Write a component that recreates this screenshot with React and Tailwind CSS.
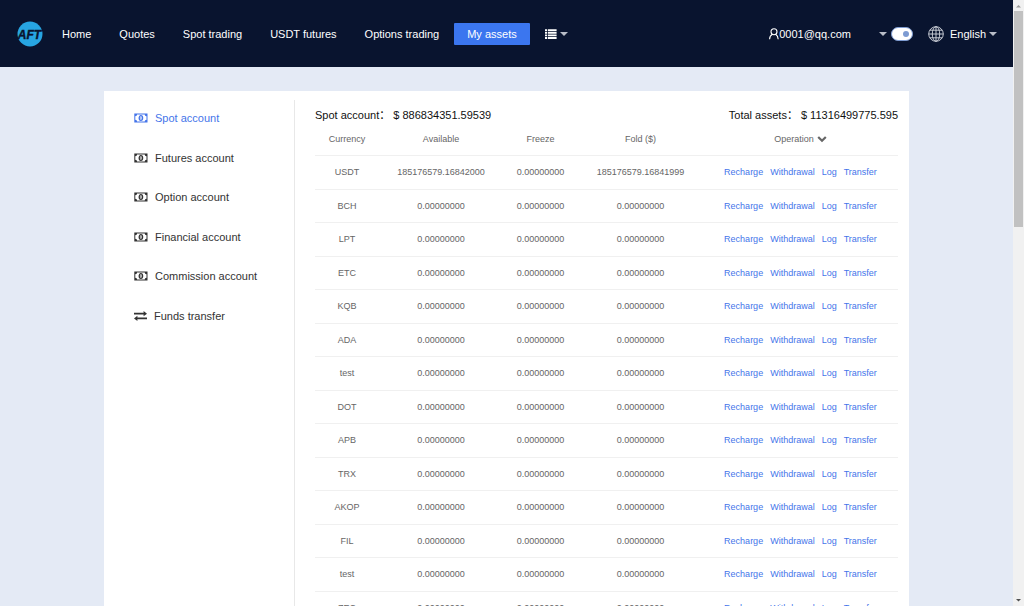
import React, { useState } from 'react';

const NAV_LINKS = ['Home', 'Quotes', 'Spot trading', 'USDT futures', 'Options trading', 'My assets'];

const ACCOUNTS = [
  'Spot account',
  'Futures account',
  'Option account',
  'Financial account',
  'Commission account',
  'Funds transfer',
];

const ZERO = '0.00000000';

const BALANCES = [
  { currency: 'USDT', available: '185176579.16842000', freeze: ZERO, fold: '185176579.16841999' },
  ...['BCH', 'LPT', 'ETC', 'KQB', 'ADA', 'test', 'DOT', 'APB', 'TRX', 'AKOP', 'FIL', 'test', 'ZEC'].map(
    (currency) => ({ currency, available: ZERO, freeze: ZERO, fold: ZERO })
  ),
];

const OPERATIONS = ['Recharge', 'Withdrawal', 'Log', 'Transfer'];

const Logo = () => (
  <svg viewBox="0 0 26 26" className="w-[26px] h-[26px] shrink-0" role="img" aria-label="AFT">
    <circle cx="13" cy="13" r="12.5" fill="#27a5e2" />
    <text
      x="12.5"
      y="17.5"
      textAnchor="middle"
      fontFamily="Liberation Sans, sans-serif"
      fontSize="12"
      fontWeight="700"
      fontStyle="italic"
      fill="#09142f"
      stroke="#09142f"
      strokeWidth="0.4"
    >
      AFT
    </text>
  </svg>
);

const MoneyIcon = () => (
  <svg viewBox="0 0 14 10" className="w-[14px] h-[10px] shrink-0" aria-hidden="true">
    <path
      fill="currentColor"
      fillRule="evenodd"
      d="M.3.4h13.200v9.200H.3zM3.100 1.400A1.800 1.800 0 0 1 1.300 3.200v3.600A1.800 1.800 0 0 1 3.100 8.600h7.600A1.800 1.800 0 0 1 12.500 6.800V3.200A1.800 1.800 0 0 1 10.700 1.400z"
    />
    <ellipse cx="6.900" cy="5" rx="1.700" ry="2.300" fill="none" stroke="currentColor" strokeWidth="1.300" />
    <path d="M6.900 4v2" stroke="currentColor" strokeWidth="0.700" />
  </svg>
);

const TransferIcon = () => (
  <svg viewBox="0 0 13 10" className="w-[13px] h-[10px] shrink-0" aria-hidden="true">
    <path fill="currentColor" d="M0 1.8h9.6V0L13 2.7 9.6 5.2V3.5H0zM13 6.5H3.4V4.8L0 7.4 3.4 10V8.2H13z" />
  </svg>
);

const ListIcon = () => (
  <svg viewBox="0 0 12 10" className="w-[12px] h-[10px]" fill="currentColor" aria-hidden="true">
    <path d="M0 .2h2.200v1.900H0zM3 .2h8.600v1.900H3zM0 2.800h2.200v1.900H0zM3 2.800h8.600v1.900H3zM0 5.400h2.200v1.900H0zM3 5.400h8.600v1.900H3zM0 8h2.200v1.900H0zM3 8h8.600v1.900H3z" />
  </svg>
);

const ChevronIcon = () => (
  <svg viewBox="0 0 10 8" className="w-[10px] h-[8px]" fill="none" stroke="currentColor" strokeWidth="2.2" aria-hidden="true">
    <path d="M1.2 2 5 5.800 8.800 2" />
  </svg>
);

const Caret = () => (
  <svg viewBox="0 0 8 4" className="w-[8px] h-[4px]" fill="#b9bdc8" aria-hidden="true">
    <path d="M0 0h8L4 4z" />
  </svg>
);

const UserIcon = () => (
  <svg viewBox="0 0 10 12" className="w-[10px] h-[12px]" fill="none" stroke="currentColor" strokeWidth="1.1" aria-hidden="true">
    <circle cx="5" cy="3.7" r="3" />
    <path d="M3.4 6.2C1.6 7.2.6 8.8.6 11.3M6.6 6.2c1.7 1 2.4 2.4 2.6 5.1" />
  </svg>
);

const GlobeIcon = () => (
  <svg viewBox="0 0 16 16" className="w-[16px] h-[16px]" fill="none" stroke="#d5d8e0" strokeWidth="0.9" aria-hidden="true">
    <circle cx="8" cy="8" r="7.3" />
    <ellipse cx="8" cy="8" rx="3.7" ry="7.3" />
    <path d="M8 .7v14.6M.7 8h14.6M1.8 4.2h12.4M1.8 11.8h12.4" />
  </svg>
);

const Header = ({ dark, onToggle }) => (
  <header className="flex items-center justify-between h-[67px] shrink-0 bg-[#09142f] pl-[17px] pr-4 pt-px text-[11px] text-white">
    <div className="flex items-center gap-[6px]">
      <Logo />
      <nav className="flex items-center gap-[2px]">
        {NAV_LINKS.map((label) => (
          <a
            key={label}
            href="#"
            className={`px-[13px] h-[22px] leading-[22px] rounded-[1px] whitespace-nowrap ${
              label === 'My assets' ? 'bg-[#3b76ef]' : ''
            }`}
          >
            {label}
          </a>
        ))}
        <button type="button" aria-label="More" className="flex items-center gap-[3px] px-[13px] h-[22px]">
          <ListIcon />
          <Caret />
        </button>
      </nav>
    </div>

    <div className="flex items-center">
      <button type="button" className="flex items-center">
        <UserIcon />
        <span className="mr-7">0001@qq.com</span>
        <Caret />
      </button>
      <input
        type="checkbox"
        role="switch"
        aria-label="Theme"
        checked={dark}
        onChange={onToggle}
        className="appearance-none flex items-center justify-end ml-1 mr-[15px] w-[22px] h-[14px] rounded-full bg-white border border-[#7d9bd2] px-[3px]
                   before:block before:w-[6px] before:h-[6px] before:rounded-full before:bg-[#7d9bd2]"
      />
      <button type="button" className="flex items-center">
        <GlobeIcon />
        <span className="ml-[6px] mr-[3px]">English</span>
        <Caret />
      </button>
    </div>
  </header>
);

const Sidebar = () => (
  <aside className="w-[191px] shrink-0 border-r border-[#e8e8e8] pl-[30px] pt-2">
    <nav className="flex flex-col justify-between h-[218px] text-[11px] leading-5 text-[#333333]">
      {ACCOUNTS.map((label, index) => (
        <a key={label} href="#" className={`flex items-center gap-[7px] ${index === 0 ? 'text-[#4575ea]' : ''}`}>
          {label === 'Funds transfer' ? <TransferIcon /> : <MoneyIcon />}
          {label}
        </a>
      ))}
    </nav>
  </aside>
);

const BalanceTable = () => (
  <table className="w-full table-fixed text-center text-[9px] text-[#666666]">
    <colgroup>
      <col className="w-[64px]" />
      <col className="w-[124px]" />
      <col className="w-[75px]" />
      <col className="w-[125px]" />
      <col className="w-[195px]" />
    </colgroup>
    <thead>
      <tr className="h-[31px] border-b border-[#f0f0f0]">
        <th className="font-normal">Currency</th>
        <th className="font-normal">Available</th>
        <th className="font-normal">Freeze</th>
        <th className="font-normal">Fold ($)</th>
        <th className="font-normal">
          <button type="button" className="inline-flex items-center gap-[3px]">
            Operation
            <ChevronIcon />
          </button>
        </th>
      </tr>
    </thead>
    <tbody>
      {BALANCES.map((row, index) => (
        <tr key={index} className="h-[34px] even:h-[33px] border-b border-[#f0f0f0]">
          <td className="pt-[2px]">{row.currency}</td>
          <td className="pt-[2px]">{row.available}</td>
          <td className="pt-[2px]">{row.freeze}</td>
          <td className="pt-[2px]">{row.fold}</td>
          <td className="pt-[2px]">
            <div className="flex justify-center gap-[7px] text-[#4575ea]">
              {OPERATIONS.map((label) => (
                <a key={label} href="#">{label}</a>
              ))}
            </div>
          </td>
        </tr>
      ))}
    </tbody>
  </table>
);

const Scrollbar = () => (
  <div className="flex flex-col items-center w-[11px] shrink-0 bg-[#f1f1f1]" aria-hidden="true">
    <svg viewBox="0 0 11 11" className="w-[11px] h-[11px] shrink-0">
      <path d="M3 7.5h5L5.500 5z" fill="#9a9a9a" />
    </svg>
    <div className="w-[9px] h-[216px] bg-[#c1c1c1]" />
    <svg viewBox="0 0 11 11" className="w-[11px] h-[11px] shrink-0 mt-auto">
      <path d="M3 4h5L5.500 6.500z" fill="#505050" />
    </svg>
  </div>
);

const App = () => {
  const [dark, setDark] = useState(true);

  return (
    <div className="flex h-screen overflow-hidden bg-[#e4eaf5] font-['Liberation_Sans','Noto_Sans_CJK_SC',sans-serif]">
      <div className="flex flex-col flex-1 min-w-0 overflow-hidden">
        <Header dark={dark} onToggle={() => setDark(!dark)} />
        <main className="flex mx-[104px] mt-6 pt-[9px] bg-white">
          <Sidebar />
          <section className="flex-1 min-w-0 pl-5 pr-[11px] pt-[6px]">
            <div className="flex justify-between text-[11px] leading-[18px] text-[#111111]">
              <p>Spot account： $ 886834351.59539</p>
              <p>Total assets： $ 11316499775.595</p>
            </div>
            <BalanceTable />
          </section>
        </main>
      </div>
      <Scrollbar />
    </div>
  );
};

export default App;
